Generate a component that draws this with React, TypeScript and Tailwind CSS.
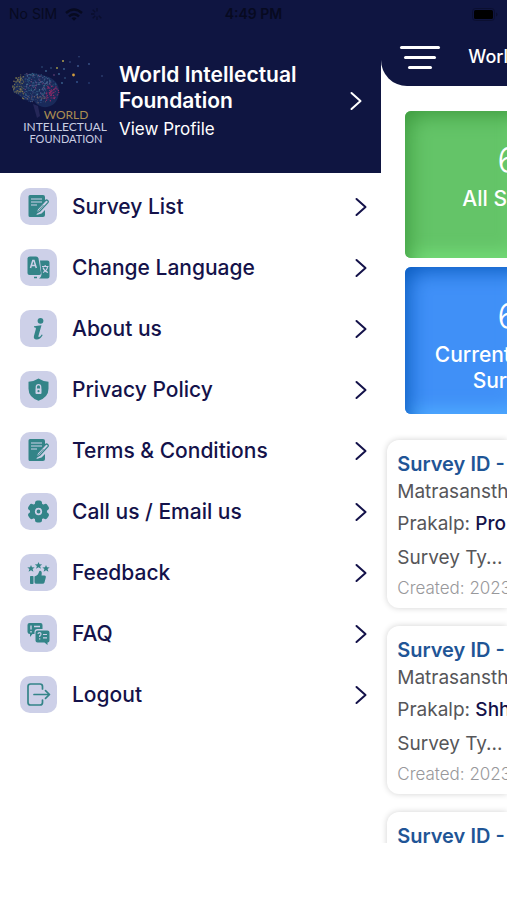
import type { ReactNode } from "react";

const TEAL = "#338488";
const PALE = "#cdd0e8";

function SurveyIcon() {
  return (
    <>
      <path d="M10 7h13q2 0 2 2v5l-7 8-1.500 5 5-1.500 3.500-3.500v5q0 2-2 2H10q-1.500 0-1.500-1.500v-19Q8.500 7 10 7z" fill={TEAL} />
      <path d="M11 11h11M11 14h11M11 17h6" stroke={PALE} strokeWidth="1" />
      <path d="M16 25.500l1.500-4.500 8-8.500q1-1 2.200 0 1.200 1 .2 2.200l-8 8.500z" fill={PALE} stroke={TEAL} strokeWidth="1.200" />
      <path d="M16.500 25l7-8" stroke={TEAL} strokeWidth=".8" />
    </>
  );
}

function LanguageIcon() {
  return (
    <>
      <path d="M10 7.500h6q2 0 2.500 2L21 24q0 2-1.500 2H9.500q-2 0-2-2V9.500q0-2 2.500-2z" fill={TEAL} />
      <path d="M20 11.500h7.500q2 0 2 2v14q0 2-2 2h-8.500q2.500-2 2.500-4z" fill={TEAL} />
      <path d="M10.500 19l2.300-7.500h1.200l2.300 7.500M11.300 16.500h4.200" fill="none" stroke={PALE} strokeWidth="1.500" />
      <path d="M22 17.500h6.500M25.200 16v1.500M23 23.500q4-2 4.500-5.500M23 18.500q1 3.500 5 5" fill="none" stroke={PALE} strokeWidth="1.200" />
      <path d="M14 28.500h3" stroke={TEAL} strokeWidth="1.300" />
    </>
  );
}

function InfoIcon() {
  return (
    <>
      <circle cx="20.500" cy="10.800" r="2.900" fill={TEAL} />
      <path d="M14 16.200l7.500-1-3 10.500q-.4 1.600.6 1.300 1.400-.6 2.600-2.600l1 .6q-2.500 4.500-6 4.500-3.700 0-2.700-3.700l1.800-6.500q.6-2-1.800-2z" fill={TEAL} />
    </>
  );
}

function ShieldIcon() {
  return (
    <>
      <path d="M18.500 7.500q4.500 3 10 3.200v7q0 8.500-10 12-10-3.500-10-12v-7q5.500-.2 10-3.200z" fill={TEAL} />
      <path d="M16.300 18v-2q0-2.300 2.200-2.300t2.200 2.300v2" fill="none" stroke={PALE} strokeWidth="1.300" />
      <rect x="15.500" y="17.500" width="6" height="5.500" rx="1" fill={PALE} />
      <circle cx="18.500" cy="20.200" r="1.100" fill={TEAL} />
    </>
  );
}

function GearIcon() {
  return (
    <>
      {[0, 60, 120].map((a) => (
        <rect key={a} x="15" y="7.500" width="7" height="22" rx="2.500" fill={TEAL} transform={`rotate(${a} 18.500 18.500)`} />
      ))}
      <circle cx="18.500" cy="18.500" r="8.500" fill={TEAL} />
      <circle cx="18.500" cy="18.500" r="2.800" fill={TEAL} stroke={PALE} strokeWidth="1.700" />
    </>
  );
}

function FeedbackIcon() {
  const star = "M0-3.600l1 2.400 2.700.1-2.100 1.700.8 2.600L0 1.700l-2.400 1.500.8-2.600-2.100-1.700 2.700-.1z";
  return (
    <g fill={TEAL}>
      <path d={star} transform="translate(11 14.500)" />
      <path d={star} transform="translate(18.500 11.500)" />
      <path d={star} transform="translate(26 14.500)" />
      <rect x="10" y="22" width="3.500" height="8" rx=".8" />
      <path d="M14.500 22.500q3.500-1 4.500-4.500.5-1.800 1.800-1 1.500.8.700 4.500h3q1.800.2 1.300 2l-1.300 5q-.4 1.300-2 1.300h-6q-2 0-2-1.500z" />
    </g>
  );
}

function FaqIcon() {
  return (
    <>
      <path d="M9.500 8h11q2 0 2 2v4h-5q-3 0-3 3v2h-2l-2.500 3v-3q-2.500 0-2.500-2v-7q0-2 2-2z" fill={TEAL} />
      <path d="M17.500 15.500h10q2 0 2 2v8q0 2-2 2v2.500l-3-2.500h-7q-2 0-2-2v-8q0-2 2-2z" fill={TEAL} />
      <path d="M11 10.500v4M11 16v1.500M14 11.500h6" stroke={PALE} strokeWidth="1.400" />
      <path d="M18 19q0-1.400 1.500-1.400T21 19q0 1-1.300 1.800v1.200M19.700 23.300v1.200M23 19.500h4M23 22.800h4" fill="none" stroke={PALE} strokeWidth="1.200" />
    </>
  );
}

function LogoutIcon() {
  return (
    <path
      d="M22.500 13v-2.500q0-2.500-2.500-2.500h-9.500Q8 8 8 10.500v16Q8 29 10.500 29H20q2.500 0 2.500-2.500V24M14 18.500h15M25.500 14.700l4 3.800-4 3.800"
      fill="none"
      stroke={TEAL}
      strokeWidth="1.700"
      strokeLinecap="round"
      strokeLinejoin="round"
    />
  );
}

const MENU: { label: string; icon: ReactNode }[] = [
  { label: "Survey List", icon: <SurveyIcon /> },
  { label: "Change Language", icon: <LanguageIcon /> },
  { label: "About us", icon: <InfoIcon /> },
  { label: "Privacy Policy", icon: <ShieldIcon /> },
  { label: "Terms & Conditions", icon: <SurveyIcon /> },
  { label: "Call us / Email us", icon: <GearIcon /> },
  { label: "Feedback", icon: <FeedbackIcon /> },
  { label: "FAQ", icon: <FaqIcon /> },
  { label: "Logout", icon: <LogoutIcon /> },
];

function Chevron() {
  return (
    <svg viewBox="0 0 12 20" className="h-5 w-3 shrink-0" fill="none" stroke="currentColor" strokeWidth="2" strokeLinecap="round" strokeLinejoin="round" aria-hidden="true">
      <path d="M1.500 2l9 8-9 8" />
    </svg>
  );
}

const BRAIN_COLORS = ["#4a7590", "#34608a", "#4c5890", "#6e4575", "#2b5578"];

const noise = (n: number) => {
  const v = Math.sin(n * 127.1) * 43758.5453;
  return v - Math.floor(v);
};

/* Specks scattered unevenly inside the two lobes of the brain. */
const SPECKS = Array.from({ length: 460 }, (_, i) => {
  const angle = noise(i + 1) * Math.PI * 2;
  const r = Math.sqrt(noise(i + 900));
  const x = 25.5 + Math.cos(angle) * r * 23.5;
  const y = 32 + Math.sin(angle) * r * 14.5 + (x - 25) * 0.14;
  let color = BRAIN_COLORS[(i * 7) % 5];
  if (x < 14) color = i % 2 ? "#86784f" : "#5d6150";
  else if (x > 36 && y > 30) color = i % 3 ? "#922a66" : "#5a3a78";
  else if (y > 40) color = i % 2 ? "#33558e" : "#6c5f68";
  return { x, y, color, r: 0.4 + (i % 3) * 0.15 };
});

const SPARKS: [number, number, number, string][] = [
  [53, 5, 1, "#b2a04c"], [63.5, 19, 1.4, "#d19c3d"], [47, 12, 1, "#9c9548"],
  [69, 0.8, 0.7, "#3c558a"], [79, 8, 0.9, "#3c558a"], [68, 10, 1, "#3c558a"],
  [60, 6, 0.8, "#3c558a"], [92, 20, 0.8, "#3c558a"], [67, 26, 1, "#32508a"],
  [79, 27, 0.8, "#32508a"], [54, 13, 0.9, "#3c6590"], [41, 12, 0.8, "#3c6590"],
  [36, 15, 0.9, "#3c6590"], [49, 18, 0.9, "#3c6590"], [44, 19, 0.8, "#7a4c80"],
  [55, 22, 0.8, "#3c6590"], [52, 27, 0.9, "#3c6590"], [32, 11, 0.7, "#3c6590"],
];

function Logo() {
  return (
    <svg viewBox="0 0 98 90" className="h-[90px] w-[98px] shrink-0" role="img" aria-label="World Intellectual Foundation">
      <path d="M3 36Q2 24 13 20 23 15 36 20 49 24 49 36 48 49 37 51 29 52 24 45L14 44Q10 39 3 36z" fill="#26457a" opacity=".45" />
      {SPECKS.map((s, i) => (
        <circle key={i} cx={s.x} cy={s.y} r={s.r} fill={s.color} />
      ))}
      <path d="M23 48l4 14 3-2-2-10z" fill="#252758" />
      {SPARKS.map(([x, y, r, fill], i) => (
        <circle key={i} cx={x} cy={y} r={r} fill={fill} />
      ))}
      <g textAnchor="middle" fontFamily="Lato, sans-serif" fontSize="12">
        <text x="56" y="63" fill="#ab8d52">WORLD</text>
        <text x="55" y="75" fill="#c9cde2">INTELLECTUAL</text>
        <text x="56" y="87" fontSize="11" fill="#c9cde2">FOUNDATION</text>
      </g>
    </svg>
  );
}

function StatusBar() {
  return (
    <div className="grid h-7 shrink-0 grid-cols-3 items-center bg-[#0f1541] px-[9px] text-sm text-[#070a20]">
      <div className="flex items-center gap-2">
        <span>No SIM</span>
        <svg viewBox="0 0 18 13" className="h-[13px] w-[18px]" fill="none" stroke="currentColor" strokeWidth="2.400" aria-hidden="true">
          <path d="M1 5q8-7 16 0M4 8.300q5-4.300 10 0" />
          <path d="M6.500 10.200q2.500-2 5 0L9 12.700z" fill="currentColor" stroke="none" />
        </svg>
        <svg viewBox="0 0 12 12" className="size-3 opacity-60" stroke="currentColor" strokeWidth="1.300" aria-hidden="true">
          <path d="M6 0v3.500M6 8.500V12M0 6h3.500M1.700 1.700l2.500 2.500M1.700 10.300l2.500-2.500M7.800 7.800l2.500 2.500" />
        </svg>
      </div>
      <span className="text-center font-semibold">4:49 PM</span>
      <svg viewBox="0 0 26 13" className="h-[13px] w-[26px] justify-self-end" aria-hidden="true">
        <rect x=".5" y=".5" width="22" height="12" rx="3" fill="none" stroke="#0b0f30" />
        <rect x="2" y="2" width="19" height="9" rx="1.500" fill="#000" />
        <path d="M24 4.500v4q1.500-.7 1.500-2t-1.500-2z" fill="#0b0f30" />
      </svg>
    </div>
  );
}

function Drawer() {
  return (
    <aside className="w-[75.2%] shrink-0 bg-white text-[#14124a]">
      <button type="button" className="flex h-[145px] w-full items-center gap-[11px] bg-[#0f1541] pr-[19px] pl-[10px] text-left text-white">
        <Logo />
        <span className="flex grow flex-col pt-1">
          <span className="text-[21px] leading-[26px] font-semibold">World Intellectual Foundation</span>
          <span className="text-[17px] leading-[30px]">View Profile</span>
        </span>
        <Chevron />
      </button>
      <nav className="pt-[3px]">
        {MENU.map((item) => (
          <a key={item.label} href="#" className="flex h-[61px] items-center gap-[15px] pr-[14px] pl-5">
            <svg viewBox="0 0 37 37" className="size-[37px] shrink-0 rounded-[10px] bg-[#cdd0e8]" aria-hidden="true">
              {item.icon}
            </svg>
            <span className="grow text-[21px] font-medium">{item.label}</span>
            <Chevron />
          </a>
        ))}
      </nav>
    </aside>
  );
}

function SurveyCard({ prakalp }: { prakalp: string }) {
  return (
    <article className="h-[168px] shrink-0 rounded-l-xl bg-white pt-[10px] pl-[10px] text-[19px] whitespace-nowrap text-[#565659] shadow-[0_0_6px_rgba(0,0,0,0.18)]">
      <h2 className="text-xl leading-7 font-semibold text-[#1f5596]">Survey ID -</h2>
      <p className="leading-7">Matrasansth</p>
      <p className="leading-9">
        Prakalp: <span className="font-medium text-[#14124a]">{prakalp}</span>
      </p>
      <p className="leading-8">Survey Ty...</p>
      <p className="text-[17px] leading-7 font-light text-[#98989b]">Created: 2023</p>
    </article>
  );
}

function Dashboard() {
  return (
    <main className="flex min-w-0 grow flex-col overflow-hidden">
      <div className="shrink-0 bg-[linear-gradient(#0f1541_50%,#fff_50%)]">
        <header className="flex h-[58px] items-center gap-7 overflow-hidden rounded-bl-[26px] bg-[#0f1541] pl-[19px] text-lg font-medium text-white">
          <button type="button" aria-label="Menu" className="flex w-10 shrink-0 flex-col items-center gap-[7px]">
            <span className="h-[3px] w-10 rounded-full bg-white" />
            <span className="h-[3px] w-8 rounded-full bg-white" />
            <span className="h-[3px] w-6 rounded-full bg-white" />
          </button>
          <span>World</span>
        </header>
      </div>
      <div className="flex shrink-0 flex-col gap-[9px] pt-[25px] pb-[26px] pl-6 text-[21px] leading-[26px] font-medium text-white">
        <section className="flex h-[147px] flex-col items-end overflow-hidden rounded-l-md bg-[#64c468] pt-[23px] text-right shadow-[inset_12px_12px_20px_-8px_#3f9c40,inset_0_-12px_16px_-6px_#74dc78]">
          <span className="-mr-3 text-4xl leading-[52px] font-light">6</span>
          <span>All S</span>
        </section>
        <section className="flex h-[147px] flex-col items-end overflow-hidden rounded-l-md bg-[#4090f7] pt-[23px] text-right shadow-[inset_12px_12px_20px_-8px_#0b5cc0,inset_0_-12px_16px_-6px_#4fabff]">
          <span className="-mr-3 text-4xl leading-[52px] font-light">6</span>
          <span className="-mr-1">Current</span>
          <span>Sur</span>
        </section>
      </div>
      <div className="flex flex-col gap-[18px] pl-[6px]">
        <SurveyCard prakalp="Pro" />
        <SurveyCard prakalp="Shh" />
        <SurveyCard prakalp="" />
      </div>
    </main>
  );
}

export default function App() {
  return (
    <div className="flex h-screen flex-col overflow-hidden bg-white pb-[57px] font-[Inter,sans-serif]">
      <StatusBar />
      <div className="flex min-h-0 grow">
        <Drawer />
        <Dashboard />
      </div>
    </div>
  );
}
